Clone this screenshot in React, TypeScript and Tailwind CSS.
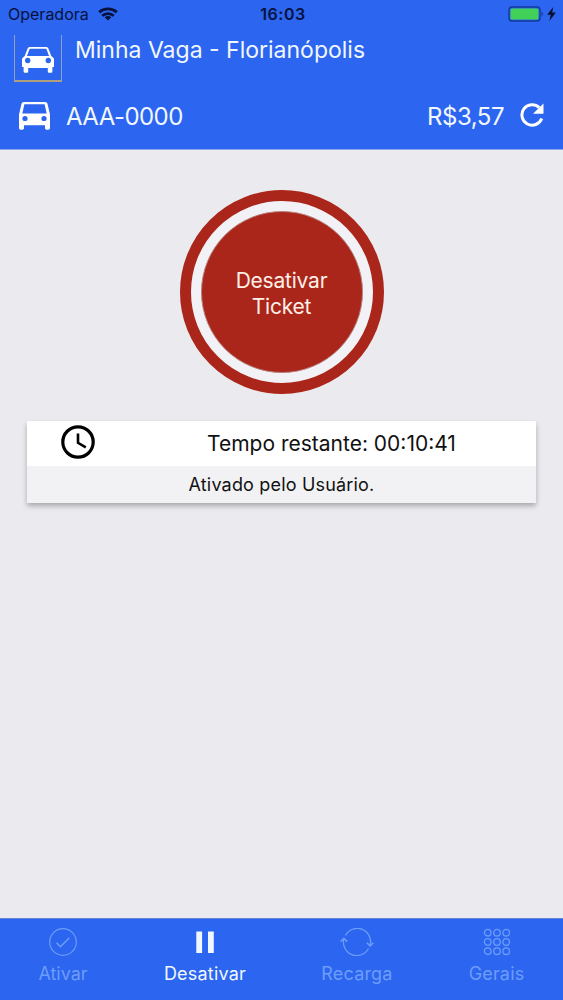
import type { ReactNode } from "react";
import clsx from "clsx";

type Tab = {
  label: string;
  icon: ReactNode;
  width: string;
  tracking: string;
  active?: boolean;
};

function WifiIcon() {
  return (
    <svg width="20" height="14" viewBox="0 0 20 14" fill="none" stroke="currentColor" strokeWidth="2.8">
      <path d="M1.2 5.2C6 .8 14 .8 18.8 5.2" />
      <path d="M4.2 8.7C7.4 5.8 12.600 5.800 15.800 8.700" />
      <path d="M10 13.600 6.700 10.300C8.600 8.700 11.400 8.700 13.300 10.300Z" fill="currentColor" stroke="none" />
    </svg>
  );
}

function BatteryIcon() {
  return (
    <svg width="36" height="16" viewBox="0 0 36 16">
      <rect x="1" y="1" width="31" height="14" rx="3" fill="none" stroke="#123a9b" strokeWidth="1.4" />
      <rect x="2.5" y="2.5" width="28" height="11" rx="1.5" fill="#41d158" />
      <path d="M33.6 5.5c1.6.6 1.6 4.4 0 5Z" fill="#123a9b" />
    </svg>
  );
}

function BoltIcon() {
  return (
    <svg width="9" height="14" viewBox="0 0 9 14" fill="#07102e">
      <path d="M6.2 0 .2 7.8h3.5L2.4 14 8.8 5.6H5.2Z" />
    </svg>
  );
}

function LogoCarIcon() {
  return (
    <svg width="32" height="26" viewBox="0 0 32 26">
      <path
        fill="#fff"
        fillRule="evenodd"
        d="M8 0h16c1.2 0 2 .6 2.5 1.7L29.3 9l2 1.8c.5.5.7 1 .7 1.8V20h-1.6v4.2c0 1-.6 1.5-1.5 1.5h-1.6c-1 0-1.5-.5-1.5-1.5V21H6.2v3.2c0 1-.5 1.5-1.5 1.5H3.1c-.9 0-1.5-.5-1.5-1.5V20H0v-7.4c0-.8.2-1.3.7-1.8l2-1.8 2.8-7.3C6 .6 6.8 0 8 0Zm-.3 1.7L4.9 9h22.2l-2.8-7.3H7.7Z"
      />
      <circle cx="5.7" cy="13.5" r="2.7" fill="#2c65ef" />
      <circle cx="26.3" cy="13.5" r="2.7" fill="#2c65ef" />
    </svg>
  );
}

function CarIcon() {
  return (
    <svg width="31" height="28" viewBox="0 0 31 28">
      <path
        fill="#fff"
        fillRule="evenodd"
        d="M5 0h21c1.300 0 2.100.7 2.500 1.800L31 12.400V26c0 1-.7 1.700-1.700 1.700h-1.600c-1 0-1.700-.7-1.700-1.700v-2.800H5V26c0 1-.7 1.700-1.700 1.700H1.700C.7 27.700 0 27 0 26V12.400L2.500 1.800C2.900.7 3.700 0 5 0Zm.4 2.300L3.300 11.500h24.400l-2.100-9.200H5.400Z"
      />
      <circle cx="6" cy="16.5" r="2.6" fill="#2c65ef" />
      <circle cx="25" cy="16.5" r="2.6" fill="#2c65ef" />
    </svg>
  );
}

function RefreshIcon() {
  return (
    <svg width="24" height="24" viewBox="0 0 24 24">
      <path d="M19.2 4.6A10.200 10.200 0 1 0 21.700 15.500" fill="none" stroke="#fff" strokeWidth="3" />
      <path d="M23.500.4v10.400H13Z" fill="#fff" />
    </svg>
  );
}

function ClockIcon() {
  return (
    <svg width="34" height="34" viewBox="0 0 34 34" fill="none" stroke="#000">
      <circle cx="17" cy="17" r="15.2" strokeWidth="3.2" />
      <path d="M17 8.500v9.300l7.800 4.500" strokeWidth="2.600" />
    </svg>
  );
}

function CheckTabIcon() {
  return (
    <svg width="28" height="28" viewBox="0 0 28 28" fill="none" stroke="currentColor" strokeWidth="1.2">
      <circle cx="14" cy="14" r="13.3" />
      <path d="m7.500 14.700 4 4 8.800-8.900" strokeWidth="1.600" />
    </svg>
  );
}

function PauseTabIcon() {
  return (
    <svg width="28" height="28" viewBox="0 0 28 28" fill="currentColor">
      <path d="M5.300 3.500h5.800v21.500H5.300zM17 3.500h5.800v21.500H17z" />
    </svg>
  );
}

function RechargeTabIcon() {
  return (
    <svg width="34" height="28" viewBox="0 0 34 28" fill="none" stroke="currentColor" strokeWidth="1.3">
      <path d="M5.5 7.5A13.300 13.300 0 0 1 30 17.500" />
      <path d="M28.500 20.500A13.300 13.300 0 0 1 4 10.500" />
      <path d="m26.800 14.800 3.300 3.200 3.200-3.200M.7 13.600l3.200-3.200 3.300 3.200" strokeWidth="1.600" />
    </svg>
  );
}

function GridTabIcon() {
  const points = [4.7, 14, 23.2];
  return (
    <svg width="28" height="28" viewBox="0 0 28 28" fill="none" stroke="currentColor" strokeWidth="1.3">
      {points.map((y) => points.map((x) => <circle key={`${x}-${y}`} cx={x} cy={y} r="3.3" />))}
    </svg>
  );
}

const tabs: Tab[] = [
  { label: "Ativar", icon: <CheckTabIcon />, width: "w-[126px]", tracking: "tracking-[0]" },
  { label: "Desativar", icon: <PauseTabIcon />, width: "w-[158px]", tracking: "tracking-[0.012em]", active: true },
  { label: "Recarga", icon: <RechargeTabIcon />, width: "w-[146px]", tracking: "tracking-[0.01em]" },
  { label: "Gerais", icon: <GridTabIcon />, width: "w-[133px]", tracking: "tracking-[0.01em]" },
];

export default function App() {
  return (
    <main className="flex h-[1000px] w-[563px] flex-col overflow-hidden bg-[#ebeaee] font-['Inter',sans-serif]">
      <header className="h-[150px] shrink-0 border-b border-[#8ba6ed] bg-[#2c65ef] text-[#f0f7ff]">
        <div className="grid h-[29px] grid-cols-3 items-center pr-[7px] pb-px pl-[8px] text-[#07123d]">
          <div className="flex items-center gap-[9px]">
            <span className="text-[16px] leading-5">Operadora</span>
            <WifiIcon />
          </div>
          <span className="pl-[2px] text-center text-[16px] leading-5 font-semibold tracking-[0.03em]">16:03</span>
          <div className="flex items-center justify-end gap-[3px]">
            <BatteryIcon />
            <BoltIcon />
          </div>
        </div>

        <div className="flex h-[60px] pt-[6px] pl-[14px]">
          <div className="flex h-[47px] w-[48px] justify-center border-x border-b-2 border-x-[#8d9fcb] border-b-[#ae9f7d] pt-[12px]">
            <LogoCarIcon />
          </div>
          <h1 className="mt-px ml-[13px] text-[23px] leading-[29px] font-normal whitespace-nowrap">Minha Vaga - Florianópolis</h1>
        </div>

        <div className="flex h-[54px] items-center pr-[19px] pl-[19px]">
          <CarIcon />
          <span className="mt-[2px] ml-[16px] text-[24px] leading-7 tracking-[-0.023em]">AAA-0000</span>
          <span className="mt-[2px] ml-auto text-[24px] leading-7 tracking-[-0.02em]">R$3,57</span>
          <span className="-mt-[2px] ml-[16px]">
            <RefreshIcon />
          </span>
        </div>
      </header>

      <section className="flex-1 pt-[40px]">
        <button className="mx-auto flex size-[204px] items-center justify-center rounded-full border-[11px] border-[#aa261a] bg-[#f2f1f5]">
          <span className="flex size-[162px] items-center justify-center rounded-full border border-[#b7817d] bg-[#aa261a] pt-[3px] text-center text-[21px] leading-[26px] tracking-[-0.01em] text-[#fff0e7]">
            Desativar
            <br />
            Ticket
          </span>
        </button>

        <div className="mt-[27px] ml-[27px] w-[509px] bg-[#f2f1f4] text-[#111] shadow-[0_3px_5px_rgba(0,0,0,0.28)]">
          <div className="flex h-[45px] items-center bg-white pl-[34px]">
            <span className="-mt-[3px]">
              <ClockIcon />
            </span>
            <span className="ml-[112px] text-[21px] leading-7 whitespace-nowrap">Tempo restante: 00:10:41</span>
          </div>
          <p className="h-[37px] text-center text-[18px] leading-[38px] tracking-[0.01em]">Ativado pelo Usuário.</p>
        </div>
      </section>

      <nav className="flex h-[82px] shrink-0 border-t border-[#6382d8] bg-[#2c65ef]">
        {tabs.map((tab) => (
          <button
            key={tab.label}
            className={clsx(
              "flex flex-col items-center pt-[9px]",
              tab.width,
              tab.active ? "text-[#f0f8ff]" : "text-[#6c9dfa]"
            )}
          >
            {tab.icon}
            <span className={clsx("mt-[6px] text-[18px] leading-6", tab.tracking)}>{tab.label}</span>
          </button>
        ))}
      </nav>
    </main>
  );
}
